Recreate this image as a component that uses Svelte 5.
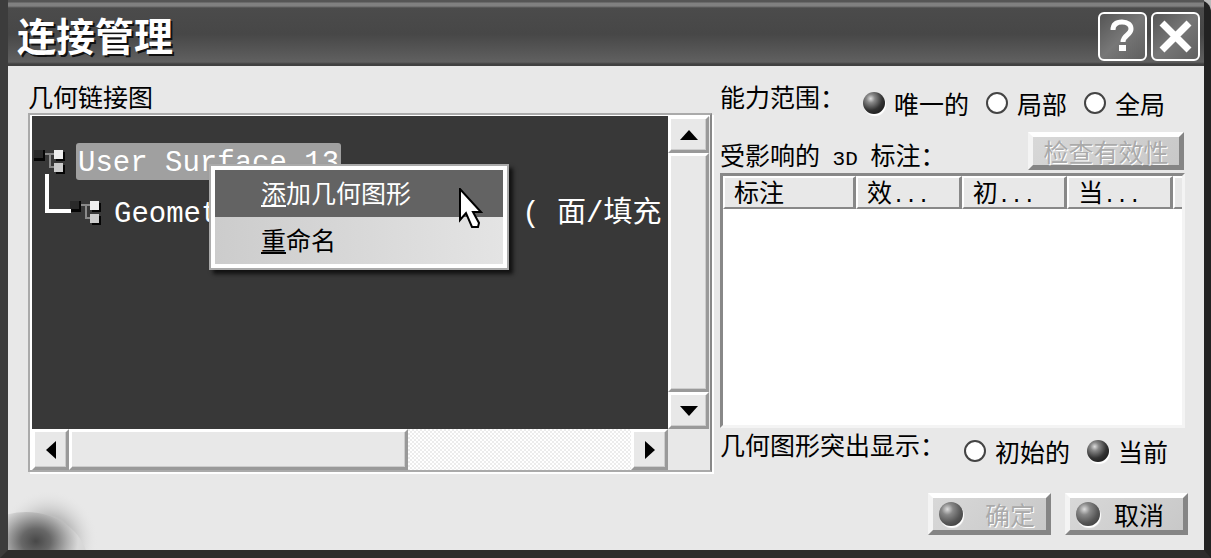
<script>
	let scope = $state('only');
	let highlight = $state('current');
	let hovered = $state('add');

	const scopes = [
		{ value: 'only', label: '唯一的' },
		{ value: 'local', label: '局部' },
		{ value: 'all', label: '全局' }
	];
	const highlights = [
		{ value: 'initial', label: '初始的' },
		{ value: 'current', label: '当前' }
	];
	const menu = [
		{ id: 'add', key: '添', rest: '加几何图形' },
		{ id: 'rename', key: '重', rest: '命名' }
	];
	const columns = [
		{ name: '标注', cut: false },
		{ name: '效', cut: true },
		{ name: '初', cut: true },
		{ name: '当', cut: true }
	];
</script>

{#snippet node()}
	<svg class="node" width="34" height="28" viewBox="0 0 34 28" aria-hidden="true">
		<path d="M2 2h11v11h-11z" fill="#050505" />
		<path d="M2 2h9v8h-9z" fill="#292929" />
		<path d="M13 6h9M18 6v13h4" fill="none" stroke="#8a8a8a" stroke-width="2" />
		<path d="M24 4h9v9h-9zM24 17h9v9h-9z" fill="#050505" />
		<path d="M22 2h9v9h-9z" fill="#eee" />
		<path d="M22 15h9v9h-9z" fill="#ccc" />
	</svg>
{/snippet}

{#snippet arrow(dir)}
	<svg class="arrow {dir}" width="18" height="18" viewBox="0 0 18 18" aria-hidden="true">
		<path d="M9 4l9 10H0z" />
	</svg>
{/snippet}

<div class="window">
	<header>
		<h1>连接管理</h1>
		<button class="sys" aria-label="帮助">
			<svg width="45" height="45" viewBox="0 0 45 45">
				<path d="M13 16c0-5 3-8 9-8s9 3 9 7c0 6-8 6-8 13" fill="none" stroke="#fff" stroke-width="5" />
				<path d="M19 31h7v6h-7z" fill="#fff" />
			</svg>
		</button>
		<button class="sys" aria-label="关闭">
			<svg width="45" height="45" viewBox="0 0 45 45">
				<path d="M9 9l27 27M36 9L9 36" fill="none" stroke="#fff" stroke-width="7" />
			</svg>
		</button>
	</header>

	<main>
		<svg class="globe" width="100" height="70" viewBox="0 0 100 70" aria-hidden="true">
			<defs>
				<radialGradient id="halo">
					<stop offset="0.5" stop-color="#a0a0a0" />
					<stop offset="1" stop-color="#e8e8e8" stop-opacity="0" />
				</radialGradient>
				<radialGradient id="ball" cx="0.58" cy="0.28" r="0.34">
					<stop offset="0" stop-color="#484848" />
					<stop offset="0.35" stop-color="#686868" />
					<stop offset="0.75" stop-color="#b0b0b0" />
					<stop offset="1" stop-color="#d8d8d8" />
				</radialGradient>
			</defs>
			<ellipse cx="40" cy="60" rx="50" ry="50" fill="url(#halo)" opacity="0.6" />
			<ellipse cx="18" cy="84" rx="62" ry="52" fill="url(#ball)" />
		</svg>

		<section class="left">
			<h2>几何链接图</h2>
			<div class="viewer">
				<div class="canvas">
					<ul>
						<li>{@render node()}<span class="item selected">User Surface 13</span></li>
						<li class="child">{@render node()}<span class="item">Geometry</span><span class="item kind">( 面/填充</span></li>
					</ul>
					<svg class="link" width="30" height="44" viewBox="0 0 30 44" aria-hidden="true">
						<path d="M2 0v37h24" fill="none" stroke="#fff" stroke-width="4" />
					</svg>
				</div>
				<div class="bar vertical">
					<button class="raised end" aria-label="向上">{@render arrow('up')}</button>
					<div class="raised thumb"></div>
					<button class="raised end" aria-label="向下">{@render arrow('down')}</button>
				</div>
				<div class="bar horizontal">
					<button class="raised end" aria-label="向左">{@render arrow('west')}</button>
					<div class="raised thumb"></div>
					<div class="track"></div>
					<button class="raised end" aria-label="向右">{@render arrow('east')}</button>
				</div>
				<div class="corner"></div>

				<div class="menu" role="menu">
					{#each menu as entry}
						<button
							role="menuitem"
							class:hot={hovered === entry.id}
							onmouseenter={() => (hovered = entry.id)}><u>{entry.key}</u>{entry.rest}</button>
					{/each}
				</div>
				<svg class="cursor" width="24" height="42" viewBox="0 0 24 42" aria-hidden="true">
					<path d="M1 1v31l6-7 6 14h6l1-4-6-11h8z" fill="#fff" stroke="#000" stroke-width="2" />
				</svg>
			</div>
		</section>

		<section class="right">
			<fieldset>
				<legend>能力范围：</legend>
				<div class="choices">
					{#each scopes as s}
						<label><input type="radio" name="scope" value={s.value} bind:group={scope} />{s.label}</label>
					{/each}
				</div>
			</fieldset>

			<div class="caption">
				<h2>受影响的<span class="half">{' 3D '}</span>标注：</h2>
				<button class="push check" disabled>检查有效性</button>
			</div>

			<div class="list">
				<table>
					<colgroup>
						<col class="wide" />
						<col class="mid" />
						<col class="mid" />
						<col class="mid" />
						<col />
					</colgroup>
					<thead>
						<tr>
							{#each columns as c}
								<th scope="col">{c.name}{#if c.cut}<span class="half">...</span>{/if}</th>
							{/each}
							<td></td>
						</tr>
					</thead>
				</table>
			</div>

			<fieldset class="last">
				<legend>几何图形突出显示：</legend>
				<div class="choices">
					{#each highlights as h}
						<label><input type="radio" name="highlight" value={h.value} bind:group={highlight} />{h.label}</label>
					{/each}
				</div>
			</fieldset>
		</section>

		<footer>
			<button class="push ok" disabled><span class="bead"></span>确定</button>
			<button class="push"><span class="bead"></span>取消</button>
		</footer>
	</main>
</div>

<style>
:global(body) {
	background: #bbb;
}
.window {
	display: flex;
	flex-direction: column;
	min-height: 100vh;
	box-sizing: border-box;
	border: solid;
	border-width: 0 7px 8px 8px;
	border-color: #333 #222 #2c2c2c #3c3c3c;
	border-radius: 0 12px 0 0;
	background: #3c3c3c;
	font-family: "Noto Sans CJK SC", sans-serif;
	font-size: 25px;
	color: #000;
}
button, input {
	font: inherit;
	color: inherit;
	margin: 0;
	padding: 0;
}
h1, h2, ul, fieldset, legend {
	margin: 0;
	padding: 0;
	border: 0;
	font-size: 25px;
	font-weight: normal;
}
header {
	display: flex;
	align-items: center;
	gap: 4px;
	height: 66px;
	padding: 6px 4px 0 9px;
	box-sizing: border-box;
	background: linear-gradient(#555 0, #555 2px, #808080 3px, #808080 6px, #4b4b4b 8px, #474747 34px, #606060 62px, #414141 64px);
}
h1 {
	flex: 1;
	padding-bottom: 4px;
	font-size: 39px;
	font-weight: bold;
	line-height: 54px;
	color: #fff;
	text-shadow: 2px 2px 0 #111;
}
.sys {
	width: 49px;
	height: 49px;
	border: 2px solid #fff;
	border-radius: 6px;
	background: linear-gradient(135deg, #555, #777 50%, #606060);
}
.sys svg {
	display: block;
}
main {
	position: relative;
	flex: 1;
	display: grid;
	grid-template-columns: 684fr 465fr;
	grid-template-rows: 1fr auto;
	column-gap: 8px;
	padding: 14px 19px 15px 20px;
	background: #e8e8e8;
}
.globe {
	position: absolute;
	left: 0;
	bottom: 0;
}
.left {
	display: flex;
	flex-direction: column;
	min-width: 0;
	padding-bottom: 4px;
}
.left h2 {
	line-height: 33px;
}
.viewer {
	position: relative;
	flex: 1;
	display: grid;
	grid-template-columns: 1fr 41px;
	grid-template-rows: 1fr 41px;
	border: 2px solid #aaa;
	border-right-color: #888;
	box-shadow: 2px 2px 0 #fff, inset 2px 2px 0 #fff;
	padding: 1px 1px 0 2px;
}
.canvas {
	position: relative;
	overflow: hidden;
	background: #383838;
	color: #fff;
	font-family: "Liberation Mono", "Noto Sans CJK SC", monospace;
}
ul {
	list-style: none;
	padding-top: 27px;
}
li {
	display: flex;
	align-items: center;
	height: 37px;
	font-size: 29px;
	white-space: pre;
}
.child {
	margin-top: 14px;
	padding-left: 36px;
}
.node {
	flex: none;
}
.item {
	margin-left: 10px;
	padding: 4px 2px 0;
	line-height: 33px;
}
.selected {
	border-radius: 3px;
	background: #a0a0a0;
}
.kind {
	flex: none;
	margin-left: 265px;
	padding-right: 0;
}
.link {
	position: absolute;
	left: 13px;
	top: 58px;
}
.raised {
	box-sizing: border-box;
	border: 3px solid;
	border-color: #fff #999 #999 #fff;
	background: #e8e8e8;
	box-shadow: inset -1px -1px 0 #ccc;
}
.bar {
	display: flex;
	background: repeating-conic-gradient(#fff 0 25%, #ececec 0 50%) 0 0 / 4px 4px;
}
.vertical {
	flex-direction: column;
}
.vertical .thumb {
	flex: 1;
}
.horizontal .thumb {
	flex: 338;
}
.track {
	flex: 226;
}
.end {
	display: flex;
	align-items: center;
	justify-content: center;
	flex: 0 0 37px;
}
.corner {
	background: #e8e8e8;
}
.down {
	transform: rotate(180deg);
}
.west {
	transform: rotate(-90deg);
}
.east {
	transform: rotate(90deg);
}
.menu {
	position: absolute;
	left: 179px;
	top: 49px;
	width: 300px;
	box-sizing: border-box;
	display: flex;
	flex-direction: column;
	padding: 4px;
	border: 2px solid #aaa;
	background: #fff;
	box-shadow: 4px 4px 4px #111;
}
.menu button {
	height: 47px;
	border: 0;
	padding-left: 46px;
	padding-bottom: 4px;
	text-align: left;
	line-height: 40px;
	background: linear-gradient(90deg, #ccc, #e4e4e4);
}
.menu .hot {
	color: #fff;
	background: #636363;
}
.cursor {
	position: absolute;
	left: 429px;
	top: 73px;
}
.right {
	display: flex;
	flex-direction: column;
	min-width: 0;
}
fieldset {
	display: flex;
	height: 46px;
	min-width: 0;
	white-space: nowrap;
}
legend {
	float: left;
	line-height: 32px;
}
.choices {
	flex: 1;
	display: flex;
	justify-content: flex-end;
	align-items: center;
	gap: 17px;
	padding-right: 20px;
}
.choices label {
	display: flex;
	align-items: center;
	gap: 9px;
	line-height: 46px;
}
input {
	appearance: none;
	box-sizing: border-box;
	width: 22px;
	height: 22px;
	border: 2px solid #444;
	border-radius: 50%;
	background: #fff;
}
input:checked, .bead {
	border: 0;
	background: radial-gradient(circle at 35% 30%, #ddd 0, #888 20%, #333 55%, #222 75%, #888 100%);
	box-shadow: 1px 2px 1px #fff;
}
.last {
	height: 48px;
}
.last .choices {
	padding-right: 17px;
}
.caption {
	display: flex;
	justify-content: space-between;
	align-items: flex-end;
	height: 47px;
	padding: 0 1px 3px 0;
	box-sizing: border-box;
	white-space: nowrap;
}
.caption h2 {
	line-height: 24px;
}
.half {
	font-family: "Liberation Mono", monospace;
	font-size: 21px;
	line-height: 1;
	white-space: pre;
}
.push {
	display: flex;
	align-items: center;
	gap: 14px;
	box-sizing: border-box;
	width: 123px;
	height: 42px;
	padding: 0 6px;
	border: 5px solid;
	border-color: #fff #858585 #858585 #f4f4f4;
	background: linear-gradient(135deg, #d8d8d8, #c8c8c8);
	line-height: 30px;
}
.push:disabled {
	color: #aaa;
	text-shadow: 1px 1px 0 #fff;
}
.ok {
	gap: 22px;
}
.check {
	justify-content: center;
	width: 156px;
	height: 38px;
	white-space: nowrap;
}
.bead {
	width: 24px;
	height: 24px;
	border-radius: 50%;
	background: radial-gradient(circle at 35% 30%, #ddd 0, #888 25%, #555 60%, #444 80%, #999 100%);
}
.list {
	flex: 1;
	border: 3px solid;
	border-color: #888 #f4f4f4 #f4f4f4 #888;
	background: #fff;
}
table {
	width: 100%;
	table-layout: fixed;
	border-collapse: separate;
	border-spacing: 0;
}
.wide {
	width: 29%;
}
.mid {
	width: 23%;
}
th, thead td {
	box-sizing: border-box;
	height: 33px;
	padding: 0 0 0 9px;
	border: solid;
	border-width: 2px 3px 2px 2px;
	border-color: #fff #888 #888 #fff;
	background: #e8e8e8;
	font-weight: normal;
	text-align: left;
	vertical-align: top;
	line-height: 26px;
	white-space: nowrap;
}
thead td {
	border-right: 0;
}
footer {
	grid-column: 1 / -1;
	display: flex;
	justify-content: flex-end;
	gap: 14px;
	padding-top: 17px;
	margin-right: -3px;
}
</style>
